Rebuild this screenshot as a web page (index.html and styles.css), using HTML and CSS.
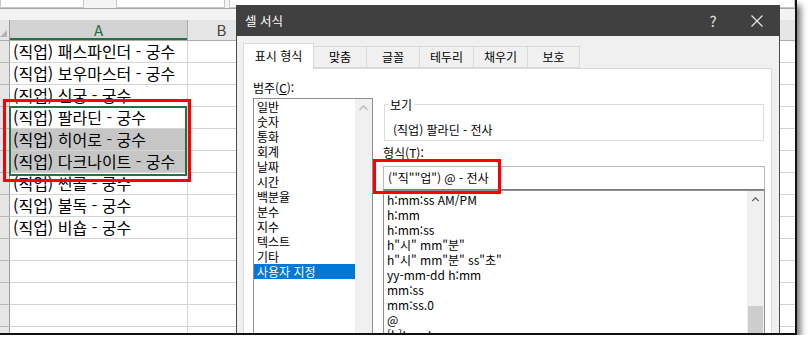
FILE: index.html
```html
<!DOCTYPE html>
<html lang="ko">
<head>
    <meta charset="UTF-8">
    <title>셀 서식</title>
    <link rel="stylesheet" href="styles.css">
</head>
<body>
    <div class="shot">
        <div class="ribbon">
            <span class="box box-name"></span>
            <span class="box box-fx"></span>
            <span class="box box-bar"></span>
        </div>
        <div class="gap"></div>

        <div class="sheet">
            <div class="row head">
                <div class="rh corner"><span class="tri"></span></div>
                <div class="cell a">A</div>
                <div class="cell b">B</div>
                <div class="cell c"></div>
            </div>
            <div class="row"><div class="rh"></div><div class="cell a">(직업) 패스파인더 - 궁수</div><div class="cell b"></div><div class="cell c"></div></div>
            <div class="row"><div class="rh"></div><div class="cell a">(직업) 보우마스터 - 궁수</div><div class="cell b"></div><div class="cell c"></div></div>
            <div class="row"><div class="rh"></div><div class="cell a">(직업) 신궁 - 궁수</div><div class="cell b"></div><div class="cell c"></div></div>
            <div class="row"><div class="rh"></div><div class="cell a">(직업) 팔라딘 - 궁수</div><div class="cell b"></div><div class="cell c"></div></div>
            <div class="row sel"><div class="rh"></div><div class="cell a">(직업) 히어로 - 궁수</div><div class="cell b"></div><div class="cell c"></div></div>
            <div class="row sel"><div class="rh"></div><div class="cell a">(직업) 다크나이트 - 궁수</div><div class="cell b"></div><div class="cell c"></div></div>
            <div class="row"><div class="rh"></div><div class="cell a">(직업) 썬콜 - 궁수</div><div class="cell b"></div><div class="cell c"></div></div>
            <div class="row"><div class="rh"></div><div class="cell a">(직업) 불독 - 궁수</div><div class="cell b"></div><div class="cell c"></div></div>
            <div class="row"><div class="rh"></div><div class="cell a">(직업) 비숍 - 궁수</div><div class="cell b"></div><div class="cell c"></div></div>
            <div class="row"><div class="rh"></div><div class="cell a"></div><div class="cell b"></div><div class="cell c"></div></div>
            <div class="row"><div class="rh"></div><div class="cell a"></div><div class="cell b"></div><div class="cell c"></div></div>
            <div class="row"><div class="rh"></div><div class="cell a"></div><div class="cell b"></div><div class="cell c"></div></div>
            <div class="row"><div class="rh"></div><div class="cell a"></div><div class="cell b"></div><div class="cell c"></div></div>
            <div class="row"><div class="rh"></div><div class="cell a"></div><div class="cell b"></div><div class="cell c"></div></div>
        </div>

        <!-- selection and annotation boxes drawn over the sheet -->
        <div class="sel-range"></div>
        <div class="mark mark-cells"></div>

        <div class="dialog">
            <div class="titlebar">
                <span class="title">셀 서식</span>
                <span class="help">?</span>
                <svg class="close" width="12" height="12" viewBox="0 0 12 12">
                    <path d="M0.5 0.5 L11.5 11.5 M11.5 0.5 L0.5 11.5" stroke="#e8e8e8" stroke-width="1.2" fill="none"/>
                </svg>
            </div>
            <div class="dialog-body">
                <div class="tabs">
                    <div class="tab active" style="width: 71px">표시 형식</div>
                    <div class="tab" style="width: 53px">맞춤</div>
                    <div class="tab" style="width: 53px">글꼴</div>
                    <div class="tab" style="width: 54px">테두리</div>
                    <div class="tab" style="width: 54px">채우기</div>
                    <div class="tab" style="width: 52px">보호</div>
                </div>
                <div class="panel">
                    <div class="col-left">
                        <div class="label">범주(<u>C</u>):</div>
                        <div class="listbox cat-list">
                            <div class="items">
                                <div class="item">일반</div>
                                <div class="item">숫자</div>
                                <div class="item">통화</div>
                                <div class="item">회계</div>
                                <div class="item">날짜</div>
                                <div class="item">시간</div>
                                <div class="item">백분율</div>
                                <div class="item">분수</div>
                                <div class="item">지수</div>
                                <div class="item">텍스트</div>
                                <div class="item">기타</div>
                                <div class="item selected">사용자 지정</div>
                            </div>
                            <div class="scrollbar">
                                <svg class="arrow" width="9" height="6" viewBox="0 0 9 6">
                                    <path d="M0.5 5 L4.5 1 L8.5 5" stroke="#c0c0c0" stroke-width="1.6" fill="none"/>
                                </svg>
                            </div>
                        </div>
                    </div>
                    <div class="col-right">
                        <fieldset class="preview">
                            <legend>보기</legend>
                            (직업) 팔라딘 - 전사
                        </fieldset>
                        <div class="label fmt-label">형식(<u>T</u>):</div>
                        <div class="input">("직""업") @ - 전사</div>
                        <div class="listbox fmt-list">
                            <div class="items">
                                <div class="item">h:mm:ss AM/PM</div>
                                <div class="item">h:mm</div>
                                <div class="item">h:mm:ss</div>
                                <div class="item">h"시" mm"분"</div>
                                <div class="item">h"시" mm"분" ss"초"</div>
                                <div class="item">yy-mm-dd h:mm</div>
                                <div class="item">mm:ss</div>
                                <div class="item">mm:ss.0</div>
                                <div class="item">@</div>
                                <div class="item">[h]:mm:ss</div>
                            </div>
                            <div class="scrollbar">
                                <svg class="arrow" width="9" height="6" viewBox="0 0 9 6">
                                    <path d="M0.5 5 L4.5 1 L8.5 5" stroke="#606060" stroke-width="1.6" fill="none"/>
                                </svg>
                                <div class="thumb"></div>
                            </div>
                        </div>
                    </div>
                </div>
            </div>
        </div>

        <div class="mark mark-input"></div>
    </div>
</body>
</html>
```

FILE: styles.css
```css
body {
    margin: 0;
    background: #fff;
    font-family: "Noto Sans CJK KR", "Noto Sans", sans-serif;
}

.shot {
    position: relative;
    width: 795px;
    height: 333px;
    overflow: hidden;
    background: #fff;
    border-right: 2px solid #111;
    border-bottom: 2px solid #111;
    box-shadow: 4px 5px 6px rgba(0, 0, 0, 0.5);
}

/* ---------- excel sheet ---------- */

.ribbon {
    display: flex;
    height: 8px;
    background: #f3f3f3;
    border-bottom: 1px solid #a6a6a6;
}

.box {
    height: 7px;
    background: #fff;
    border: 1px solid #c6c6c6;
    border-top: none;
}

.box-name { width: 82px; }
.box-fx { width: 107px; margin-left: 32px; }
.box-bar { flex: 1; margin-left: 4px; }

.gap {
    height: 11px;
    background: #f3f3f3;
}

.row {
    display: flex;
    height: 22px;
    box-sizing: border-box;
    border-bottom: 1px solid #d4d4d4;
}

.row.head {
    height: 21px;
    background: #e6e6e6;
    border-bottom: 1px solid #ababab;
}

.rh {
    flex: none;
    width: 10px;
    box-sizing: border-box;
    background: #e6e6e6;
    border-right: 1px solid #9b9b9b;
    box-shadow: 0 1px 0 #b8b8b8;
}

.corner {
    position: relative;
    box-shadow: none;
}

.tri {
    position: absolute;
    right: 2px;
    bottom: 3px;
    border-left: 7px solid transparent;
    border-bottom: 7px solid #b4b4b4;
}

.cell {
    flex: none;
    box-sizing: border-box;
    border-right: 1px solid #d4d4d4;
    padding-left: 3px;
    font-size: 16px;
    line-height: 21px;
    color: #000;
    white-space: nowrap;
}

.cell.a { width: 178px; }
.cell.b { width: 68px; }
.cell.c { flex: 1; border-right: none; }

.head .cell {
    padding: 0;
    text-align: center;
    line-height: 20px;
    font-size: 15px;
    color: #444;
    border-right-color: #ababab;
}

.head .cell.a {
    background: #d2d2d2;
    color: #1e6b41;
    box-shadow: inset 0 -2px 0 #217346;
}

.row.sel .cell.a {
    background: #c6c6c6;
}

.sel-range {
    position: absolute;
    left: 9px;
    top: 106px;
    width: 178px;
    height: 70px;
    box-sizing: border-box;
    border: 2px solid #217346;
}

.mark {
    position: absolute;
    box-sizing: border-box;
    border: 3px solid #f00;
}

.mark-cells {
    left: 3px;
    top: 99px;
    width: 188px;
    height: 83px;
}

.mark-input {
    left: 373px;
    top: 159px;
    width: 128px;
    height: 35px;
}

/* ---------- format cells dialog ---------- */

.dialog {
    position: absolute;
    left: 236px;
    top: 5px;
    width: 544px;
    height: 340px;
    box-sizing: border-box;
    background: #f0f0f0;
    border: 1px solid #4a4a4a;
    border-top: none;
    font-size: 12px;
    color: #000;
}

.titlebar {
    display: flex;
    align-items: center;
    height: 31px;
    margin: 0 -1px;
    background: #404040;
    color: #fff;
}

.title {
    flex: 1;
    padding-left: 9px;
    font-size: 12.5px;
}

.help {
    width: 14px;
    margin-right: 31px;
    text-align: center;
    font-size: 15px;
    color: #e0e0e0;
}

.close {
    margin-right: 17px;
}

.dialog-body {
    padding: 7px 7px 0 6px;
}

.tabs {
    display: flex;
    align-items: flex-end;
    height: 25px;
}

.tab {
    box-sizing: border-box;
    height: 22px;
    line-height: 20px;
    text-align: center;
    background: #f0f0f0;
    border: 1px solid #d9d9d9;
    border-left: none;
}

.tab.active {
    position: relative;
    height: 26px;
    margin-bottom: -1px;
    line-height: 24px;
    background: #fff;
    border-left: 1px solid #d9d9d9;
    border-bottom: none;
}

.panel {
    display: flex;
    height: 280px;
    background: #fff;
    border: 1px solid #d9d9d9;
}

.label {
    line-height: 15px;
}

.col-left {
    padding: 11px 0 0 9px;
}

.listbox {
    display: flex;
    box-sizing: border-box;
    margin-top: 3px;
    border: 1px solid #8c8f96;
    background: #fff;
}

.cat-list {
    width: 120px;
    height: 240px;
}

.items {
    flex: 1;
    line-height: 15px;
}

.item {
    padding-left: 3px;
    white-space: nowrap;
}

.item.selected {
    background: #0078d7;
    color: #fff;
}

.scrollbar {
    display: flex;
    flex-direction: column;
    align-items: center;
    width: 17px;
    background: #f0f0f0;
}

.arrow {
    margin-top: 6px;
}

.thumb {
    width: 15px;
    height: 40px;
    margin-top: 104px;
    background: #cdcdcd;
}

.col-right {
    width: 382px;
    margin-left: 10px;
    padding-top: 28px;
}

.preview {
    margin: 0 1px;
    padding: 10px 8px 3px;
    min-width: 0;
    border: 1px solid #dcdcdc;
    line-height: 15px;
}

.preview legend {
    margin-left: -5px;
    padding: 0 2px;
    line-height: 15px;
}

.fmt-label {
    margin-top: 4px;
}

.input {
    box-sizing: border-box;
    height: 24px;
    margin-top: 6px;
    padding-left: 4px;
    line-height: 22px;
    border: 1px solid #b9b9b9;
    border-bottom-color: #7a7a7a;
    white-space: nowrap;
}

.fmt-list {
    height: 150px;
    margin-top: 0;
}

.fmt-list .items {
    padding-top: 1px;
}
```
